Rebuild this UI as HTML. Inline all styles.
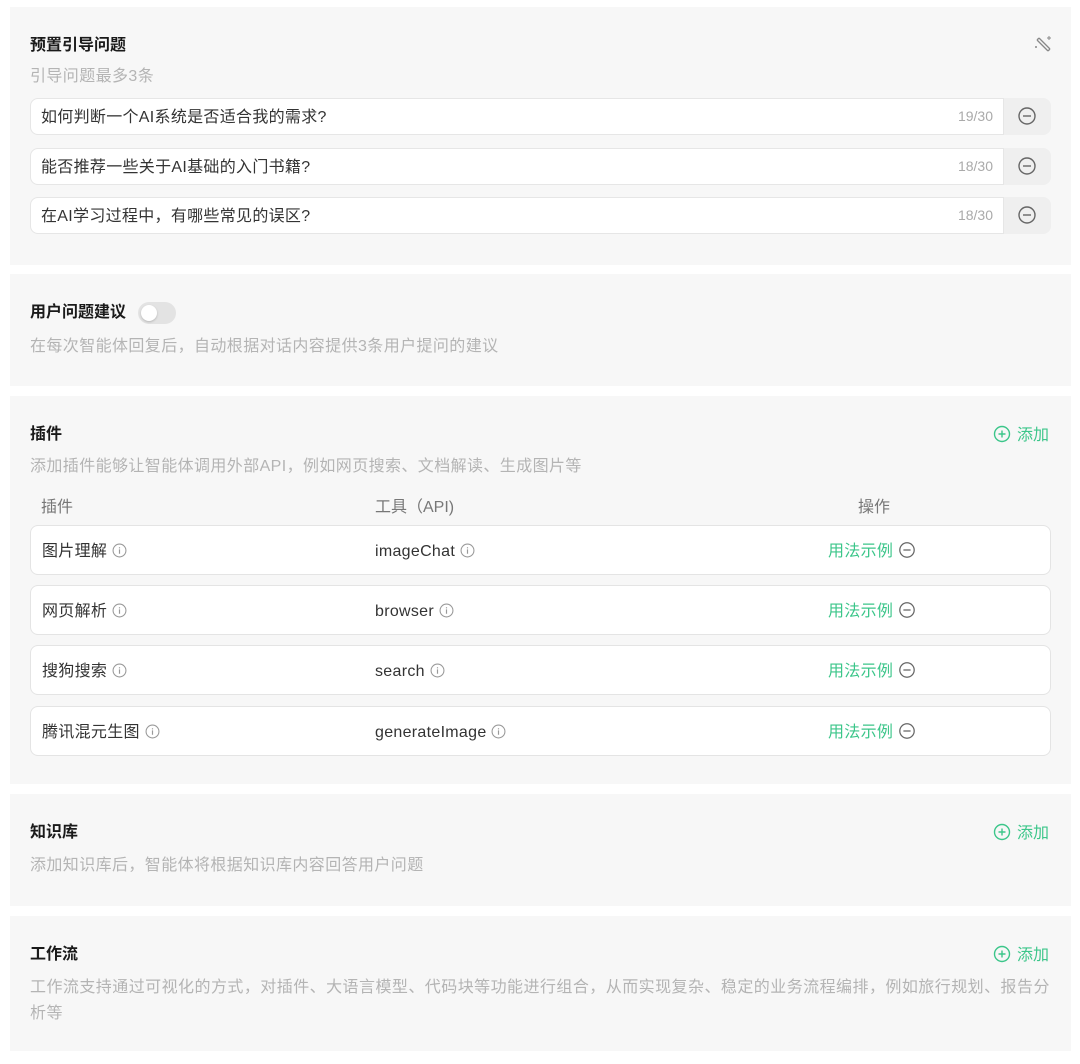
<!DOCTYPE html>
<html><head><meta charset="utf-8"><style>
*{margin:0;padding:0;box-sizing:border-box}
body{width:1080px;height:1064px;background:#fff;font-family:"Liberation Sans","Noto Sans CJK SC",sans-serif;position:relative;overflow:hidden;color:#333}
.card{position:absolute;left:10px;width:1061px;background:#f7f7f7}
.a{position:absolute;white-space:nowrap}
.t{font-size:16px;font-weight:bold;color:#1a1a1a;line-height:20px}
.s{font-size:16px;color:#b4b4b4;line-height:22px;letter-spacing:0.4px}
.inp{position:absolute;left:30px;width:1021px;height:37px;background:#efefef;border-radius:8px}
.inp .f{position:absolute;left:0;top:0;width:974px;height:37px;background:#fff;border:1px solid #e6e6e6;border-radius:8px 0 0 8px;font-size:16px;line-height:37px;padding-left:10px;color:#333;letter-spacing:0.3px}
.inp .c{position:absolute;right:10px;top:0;font-size:14px;color:#aaa;letter-spacing:0}
.inp svg{position:absolute;left:987px;top:8px}
.row{position:absolute;left:30px;width:1021px;height:50px;background:#fff;border:1px solid #e4e4e4;border-radius:8px;font-size:16px;line-height:52px;color:#333}
.row span{position:absolute;letter-spacing:0.3px}
.g{color:#3cc68a}
.add{position:absolute;left:993px;font-size:16px;color:#3cc68a;line-height:20px}
.add svg{vertical-align:-3px;margin-right:6px}
</style></head><body>
<svg width="0" height="0" style="position:absolute"><defs>
<symbol id="m" viewBox="0 0 20 20"><circle cx="10" cy="10" r="8" fill="none" stroke="#666" stroke-width="1.4"/><path d="M6 10h8" stroke="#666" stroke-width="1.4"/></symbol>
<symbol id="i" viewBox="0 0 14 14"><circle cx="7" cy="7" r="6" fill="none" stroke="#999" stroke-width="1"/><path d="M7 6v4M7 4v1" stroke="#999" stroke-width="1.1"/></symbol>
<symbol id="p" viewBox="0 0 18 18"><circle cx="9" cy="9" r="7.5" fill="none" stroke="#3cc68a" stroke-width="1.4"/><path d="M5.5 9h7M9 5.5v7" stroke="#3cc68a" stroke-width="1.4"/></symbol>
</defs></svg>

<div class="card" style="top:7px;height:258px"></div>
<div class="a t" style="left:30px;top:36px">预置引导问题</div>
<svg class="a" style="left:1033px;top:34px" width="20" height="20" viewBox="0 0 20 20"><path d="M4 6l11 11M6 4l11 11M4 6l2-2M15 17l2-2" stroke="#888" stroke-width="1.3" fill="none"/><path d="M16 2v4M14 4h4M3 12v2M2 13h2" stroke="#888" stroke-width="1"/></svg>
<div class="a s" style="left:30px;top:66px">引导问题最多3条</div>
<div class="inp" style="top:98px"><div class="f">如何判断一个AI系统是否适合我的需求?<span class="c" style="line-height:35px">19/30</span></div><svg width="20" height="20"><use href="#m"/></svg></div>
<div class="inp" style="top:148px"><div class="f">能否推荐一些关于AI基础的入门书籍?<span class="c" style="line-height:35px">18/30</span></div><svg width="20" height="20"><use href="#m"/></svg></div>
<div class="inp" style="top:197px"><div class="f">在AI学习过程中，有哪些常见的误区?<span class="c" style="line-height:35px">18/30</span></div><svg width="20" height="20"><use href="#m"/></svg></div>

<div class="card" style="top:274px;height:112px"></div>
<div class="a t" style="left:30px;top:303px">用户问题建议</div>
<div class="a" style="left:138px;top:302px;width:38px;height:22px;border-radius:11px;background:#e3e3e3"><div style="position:absolute;left:3px;top:3px;width:16px;height:16px;border-radius:8px;background:#fff;box-shadow:0 1px 2px rgba(0,0,0,.2)"></div></div>
<div class="a s" style="left:30px;top:336px">在每次智能体回复后，自动根据对话内容提供3条用户提问的建议</div>

<div class="card" style="top:396px;height:388px"></div>
<div class="a t" style="left:30px;top:425px">插件</div>
<div class="add" style="top:425px"><svg width="18" height="18"><use href="#p"/></svg>添加</div>
<div class="a s" style="left:30px;top:456px">添加插件能够让智能体调用外部API，例如网页搜索、文档解读、生成图片等</div>
<div class="a" style="left:41px;top:497px;font-size:16px;color:#777;line-height:22px">插件</div>
<div class="a" style="left:375px;top:497px;font-size:16px;color:#777;line-height:22px">工具（API)</div>
<div class="a" style="left:858px;top:497px;font-size:16px;color:#777;line-height:22px">操作</div>
<div class="row" style="top:525px"><span style="left:11px">图片理解 <svg width="15" height="15" style="vertical-align:-2px"><use href="#i"/></svg></span><span style="left:344px">imageChat <svg width="15" height="15" style="vertical-align:-2px"><use href="#i"/></svg></span><span class="g" style="left:797px">用法示例 <svg width="18" height="18" style="vertical-align:-3px"><use href="#m"/></svg></span></div>
<div class="row" style="top:585px"><span style="left:11px">网页解析 <svg width="15" height="15" style="vertical-align:-2px"><use href="#i"/></svg></span><span style="left:344px">browser <svg width="15" height="15" style="vertical-align:-2px"><use href="#i"/></svg></span><span class="g" style="left:797px">用法示例 <svg width="18" height="18" style="vertical-align:-3px"><use href="#m"/></svg></span></div>
<div class="row" style="top:645px"><span style="left:11px">搜狗搜索 <svg width="15" height="15" style="vertical-align:-2px"><use href="#i"/></svg></span><span style="left:344px">search <svg width="15" height="15" style="vertical-align:-2px"><use href="#i"/></svg></span><span class="g" style="left:797px">用法示例 <svg width="18" height="18" style="vertical-align:-3px"><use href="#m"/></svg></span></div>
<div class="row" style="top:706px"><span style="left:11px">腾讯混元生图 <svg width="15" height="15" style="vertical-align:-2px"><use href="#i"/></svg></span><span style="left:344px">generateImage <svg width="15" height="15" style="vertical-align:-2px"><use href="#i"/></svg></span><span class="g" style="left:797px">用法示例 <svg width="18" height="18" style="vertical-align:-3px"><use href="#m"/></svg></span></div>

<div class="card" style="top:794px;height:112px"></div>
<div class="a t" style="left:30px;top:823px">知识库</div>
<div class="add" style="top:823px"><svg width="18" height="18"><use href="#p"/></svg>添加</div>
<div class="a s" style="left:30px;top:855px">添加知识库后，智能体将根据知识库内容回答用户问题</div>

<div class="card" style="top:916px;height:135px"></div>
<div class="a t" style="left:30px;top:945px">工作流</div>
<div class="add" style="top:945px"><svg width="18" height="18"><use href="#p"/></svg>添加</div>
<div class="a s" style="left:30px;top:975px;white-space:normal;width:1030px;letter-spacing:0.45px;line-height:26px">工作流支持通过可视化的方式，对插件、大语言模型、代码块等功能进行组合，从而实现复杂、稳定的业务流程编排，例如旅行规划、报告分析等</div>
</body></html>
